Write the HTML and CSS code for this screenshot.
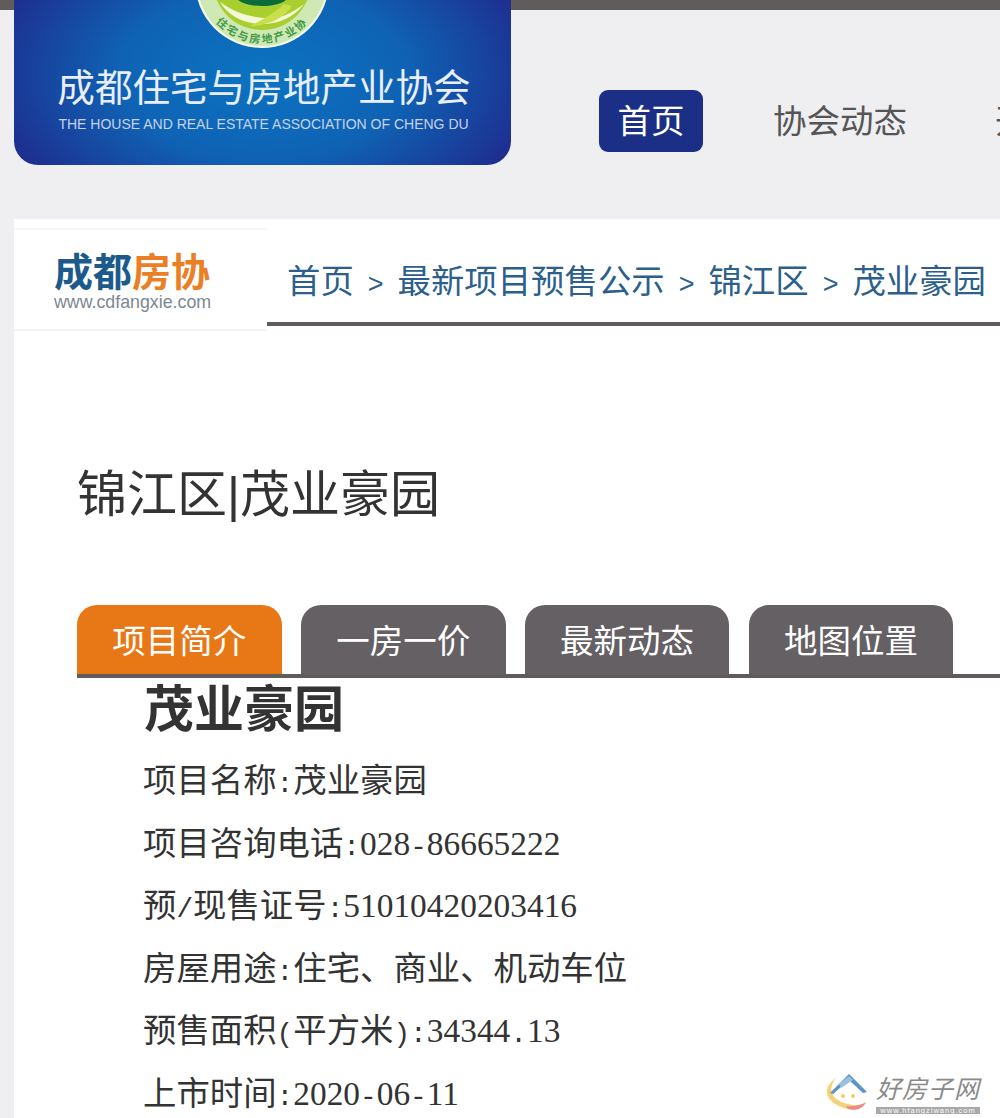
FILE: index.html
```html
<!DOCTYPE html>
<html lang="zh-CN">
<head>
<meta charset="utf-8">
<title>锦江区|茂业豪园</title>
<link rel="stylesheet" href="styles.css">
</head>
<body>
<div class="topbar"></div>
<header class="header">
  <div class="brand">
    <svg class="emblem" width="140" height="60" viewBox="0 0 140 60">
      <defs>
        <path id="ringtext" d="M 11 0 A 62 62 0 0 0 129 0"/>
      </defs>
      <circle cx="70" cy="-19" r="67" fill="#f4fbe6"/>
      <circle cx="70" cy="-19" r="65" fill="#cfe8b4"/>
      <circle cx="70" cy="-19" r="49" fill="#a9cf2e"/>
      <path d="M28 2 C44 30 92 32 112 4 C96 16 84 20 72 18 C60 17 44 14 28 2Z" fill="#f4f8d8"/>
      <path d="M58 26 C70 20 84 12 92 4 L100 6 C92 18 76 26 58 26Z" fill="#c8de4a"/>
      <path d="M46 0 C56 8 84 8 94 0Z" fill="#0c6b3a"/>
      <text class="emblem-text"><textPath href="#ringtext" startOffset="50%" text-anchor="middle">住宅与房地产业协</textPath></text>
    </svg>
    <div class="brand-cn">成都住宅与房地产业协会</div>
    <div class="brand-en">THE HOUSE AND REAL ESTATE ASSOCIATION OF CHENG DU</div>
  </div>
  <nav class="nav">
    <a class="nav-item nav-active">首页</a>
    <a class="nav-item">协会动态</a>
    <a class="nav-item">开发企业</a>
  </nav>
</header>
<main class="main">
  <div class="crumbbar">
    <div class="sitelogo">
      <div class="sitelogo-cn"><span class="blue">成都</span><span class="orange">房协</span></div>
      <div class="sitelogo-url">www.cdfangxie.com</div>
    </div>
    <div class="crumbs">
      <span>首页</span><span class="sep">&gt;</span><span>最新项目预售公示</span><span class="sep">&gt;</span><span>锦江区</span><span class="sep">&gt;</span><span>茂业豪园</span>
    </div>
  </div>
  <div class="content">
    <h1 class="title">锦江区|茂业豪园</h1>
    <div class="tabs">
      <div class="tab tab-active">项目简介</div>
      <div class="tab">一房一价</div>
      <div class="tab">最新动态</div>
      <div class="tab">地图位置</div>
    </div>
    <div class="detail">
      <h2 class="detail-title">茂业豪园</h2>
      <p class="row">项目名称<span class="p">:</span>茂业豪园</p>
      <p class="row">项目咨询电话<span class="p">:</span><span class="n">028<span class="p">-</span>86665222</span></p>
      <p class="row">预<span class="p">/</span>现售证号<span class="p">:</span><span class="n">51010420203416</span></p>
      <p class="row">房屋用途<span class="p">:</span>住宅、商业、机动车位</p>
      <p class="row">预售面积<span class="p">(</span>平方米<span class="p">)</span><span class="p">:</span><span class="n">34344<span class="p">.</span>13</span></p>
      <p class="row">上市时间<span class="p">:</span><span class="n">2020<span class="p">-</span>06<span class="p">-</span>11</span></p>
    </div>
  </div>
</main>
<div class="watermark">
  <svg class="wm-icon" width="46" height="42" viewBox="0 0 46 42">
    <path d="M12 6 C-3 16 1 30 20 36 C30 39 38 38 42 31 C34 35 20 33 11 26 C6 21 6 13 12 6Z" fill="#f2d27a"/>
    <path d="M24 37 C32 39 38 37 42 30 C37 33 31 35 22 34Z" fill="#e98a86"/>
    <path d="M6 21 L25 2 L43 20 L39 21 L25 8 L9 22Z" fill="#5b93c4"/>
    <path d="M15 12 L25 4 L29 8 L17 16Z" fill="#9cc0dd"/>
    <circle cx="19" cy="24" r="2" fill="#f4cf5e"/>
    <circle cx="29" cy="24" r="2" fill="#f4cf5e"/>
  </svg>
  <div class="wm-text">
    <div class="wm-cn">好房子网</div>
    <div class="wm-url">www.hfangziwang.com</div>
  </div>
</div>
</body>
</html>
```
FILE: styles.css
```css
* { box-sizing: border-box; }
html, body { margin: 0; padding: 0; }
body {
  position: relative;
  width: 1000px;
  height: 1118px;
  overflow: hidden;
  background: #efeef1;
  font-family: "Liberation Sans", "Noto Sans CJK SC", sans-serif;
  white-space: nowrap;
}
.topbar { height: 10px; background: #605c5c; }
.header { display: flex; height: 209px; margin-left: 14px; }
.brand {
  position: relative;
  flex: none;
  width: 497px;
  height: 165px;
  margin-top: -10px;
  border-radius: 0 0 24px 24px;
  overflow: hidden;
  background: radial-gradient(ellipse 290px 170px at 50% 45%, #0b74c2 0%, #0f62b4 50%, #1f2a8c 100%);
  color: #e8eefa;
  text-align: center;
}
.emblem { position: absolute; left: 178px; top: 0; }
.emblem-text { font-size: 11px; letter-spacing: 2px; fill: #3f9a46; font-weight: 700; }
.brand-cn { padding-top: 67px; font-size: 37.6px; line-height: 42px; margin-left: 3px; }
.brand-en { margin-top: 6px; font-size: 14px; line-height: 18px; color: #c5d3ee; margin-left: 2px; }
.nav { display: flex; flex: none; gap: 52px; margin-left: 88px; padding-top: 80px; align-items: flex-start; }
.nav-item { flex: none; height: 62px; padding: 0 18px; font-size: 33.5px; line-height: 64px; color: #555; border-radius: 9px; }
.nav-active { padding: 0 18.5px; background: #1c2f87; color: #fff; }
.main { margin-left: 14px; height: 899px; background: #fff; }
.crumbbar { display: flex; padding-top: 9px; }
.sitelogo {
  flex: none;
  width: 253px;
  height: 103px;
  padding: 21px 0 0 40px;
  border-top: 2px solid #f6f6f6;
  border-bottom: 2px solid #f3f3f3;
}
.sitelogo-cn { font-size: 39px; line-height: 44px; font-weight: 700; }
.blue { color: #1d5a8c; }
.orange { color: #ea7f26; }
.sitelogo-url { font-size: 17.8px; line-height: 14px; color: #7d8794; }
.crumbs {
  flex: 1;
  height: 98px;
  padding: 30px 0 0 20px;
  border-bottom: 4px solid #605c5c;
  font-size: 33.4px;
  line-height: 48px;
  color: #2c5f8c;
}
.sep { margin: 0 14px; font-size: 27px; }
.content { padding-left: 63px; }
.title { margin: 0; padding-top: 128px; font-size: 50px; line-height: 72px; font-weight: 400; color: #333; }
.tabs { display: flex; gap: 19.2px; margin-top: 74px; border-bottom: 4px solid #605c5c; height: 73px; }
.tab {
  flex: none;
  width: 204.7px;
  height: 69px;
  border-radius: 20px 20px 0 0;
  background: #646064;
  color: #fff;
  font-size: 33.5px;
  line-height: 74px;
  text-align: center;
}
.tab-active { background: #e87716; }
.detail { padding-left: 66px; color: #333; }
.detail-title { margin: 0 0 7px; font-family: "Liberation Serif", "Noto Sans CJK SC", serif; font-size: 50px; line-height: 65px; font-weight: 700; padding-left: 1px; }
.row { margin: 0; height: 62.5px; font-size: 33.4px; line-height: 62.5px; }
.n { font-family: "Liberation Serif", serif; line-height: 1; }
.p { display: inline-block; width: 16.7px; font-family: "Liberation Mono", monospace; font-size: 27.8px; line-height: 1; text-align: center; }
.watermark { position: absolute; left: 824px; top: 1072px; display: flex; gap: 6px; }
.wm-text { width: 104px; padding-top: 2px; }
.wm-cn { font-size: 25px; line-height: 30px; color: #8a8a8a; letter-spacing: 1px; font-style: italic; }
.wm-url { margin-top: 3px; height: 7px; background: #a8a8a8; color: #fff; font-size: 7.5px; line-height: 7px; letter-spacing: 1px; text-align: center; overflow: hidden; }
```
